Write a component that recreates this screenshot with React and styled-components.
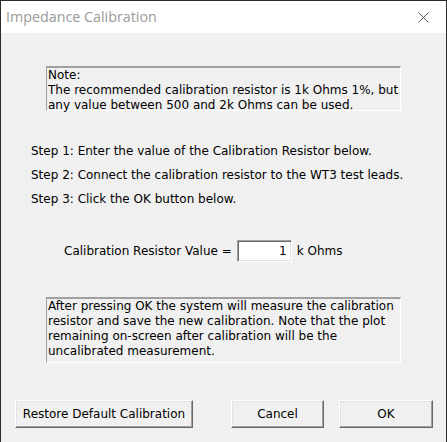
import React from 'react';
import styled, { createGlobalStyle } from 'styled-components';

const GlobalStyle = createGlobalStyle`
  html, body {
    margin: 0;
    padding: 0;
    background: #f0f0f0;
  }
`;

const App = () => {
  return (
    <>
      <GlobalStyle />
      <Window>
        <TitleBar>
          <Title>Impedance Calibration</Title>
          <CloseButton aria-label="Close">
            <svg width="11" height="11" viewBox="0 0 11 11">
              <path d="M0.5 0.5 L10.5 10.5 M10.5 0.5 L0.5 10.5" stroke="#5a5a5a" strokeWidth="1" fill="none" />
            </svg>
          </CloseButton>
        </TitleBar>
        <Body>
          <InfoBox $top={33} $height={45}>
            Note:
            <br />
            The recommended calibration resistor is 1k Ohms 1%, but
            <br />
            any value between 500 and 2k Ohms can be used.
          </InfoBox>
          <Steps>
            <Step>Step 1: Enter the value of the Calibration Resistor below.</Step>
            <Step>Step 2: Connect the calibration resistor to the WT3 test leads.</Step>
            <Step>Step 3: Click the OK button below.</Step>
          </Steps>
          <ValueRow>
            <Label>Calibration Resistor Value =</Label>
            <ValueInput defaultValue="1" />
            <Label>k Ohms</Label>
          </ValueRow>
          <InfoBox $top={35} $height={66}>
            After pressing OK the system will measure the calibration
            <br />
            resistor and save the new calibration. Note that the plot
            <br />
            remaining on-screen after calibration will be the
            <br />
            uncalibrated measurement.
          </InfoBox>
          <ButtonBar>
            <Button $width={178}>Restore Default Calibration</Button>
            <Spacer />
            <Button $width={93}>Cancel</Button>
            <Button $width={94}>OK</Button>
          </ButtonBar>
        </Body>
      </Window>
    </>
  );
};

const Window = styled.div`
  width: 447px;
  height: 442px;
  box-sizing: border-box;
  border: 1px solid #2b2b2b;
  border-bottom: none;
  display: flex;
  flex-direction: column;
  background: #f0f0f0;
  font-family: "DejaVu Sans", Verdana, sans-serif;
  font-size: 12px;
  color: #000;
  overflow: hidden;
`;

const TitleBar = styled.div`
  height: 32px;
  flex: none;
  background: #fff;
  display: flex;
  align-items: center;
  padding-left: 5px;
`;

const Title = styled.div`
  flex: 1;
  font-family: "Open Sans", "Noto Sans", sans-serif;
  font-size: 14.3px;
  color: #9a9a9a;
  margin-top: -1px;
`;

const CloseButton = styled.div`
  width: 46px;
  height: 32px;
  display: flex;
  align-items: center;
  justify-content: center;
`;

const Body = styled.div`
  flex: 1;
  display: flex;
  flex-direction: column;
  padding: 0 0 0 45px;
`;

const InfoBox = styled.div`
  width: 355px;
  height: ${(p) => p.$height}px;
  margin-top: ${(p) => p.$top}px;
  box-sizing: border-box;
  border-top: 2px solid #a0a0a0;
  border-left: 1px solid #a0a0a0;
  border-right: 1px solid #fff;
  border-bottom: 1px solid #fff;
  padding: 0 0 0 1px;
  line-height: 15px;
  white-space: nowrap;
`;

const Steps = styled.div`
  margin-top: 33px;
  margin-left: -15px;
  display: flex;
  flex-direction: column;
  gap: 9px;
`;

const Step = styled.div`
  line-height: 15px;
`;

const ValueRow = styled.div`
  margin-top: 33px;
  margin-left: 18px;
  display: flex;
  align-items: center;
  gap: 5px;
`;

const Label = styled.span`
  line-height: 15px;
`;

const ValueInput = styled.input`
  width: 55px;
  height: 22px;
  box-sizing: border-box;
  border: 1px solid;
  border-color: #a0a0a0 #fff #fff #a0a0a0;
  box-shadow: inset 1px 1px #696969, inset -1px -1px #e3e3e3;
  background: #fff;
  font: inherit;
  text-align: right;
  padding: 0 4px 0 0;
  outline: none;
`;

const ButtonBar = styled.div`
  margin-top: 37px;
  margin-left: -31px;
  width: 418px;
  display: flex;
  gap: 15px;
`;

const Spacer = styled.div`
  flex: 1;
`;

const Button = styled.button`
  width: ${(p) => p.$width}px;
  height: 28px;
  box-sizing: border-box;
  border: 1px solid;
  border-color: #fff #696969 #696969 #fff;
  box-shadow: inset -1px -1px #a0a0a0, inset 1px 1px #e3e3e3;
  background: #f0f0f0;
  font: inherit;
  color: #000;
  padding: 0;
`;

export default App;
